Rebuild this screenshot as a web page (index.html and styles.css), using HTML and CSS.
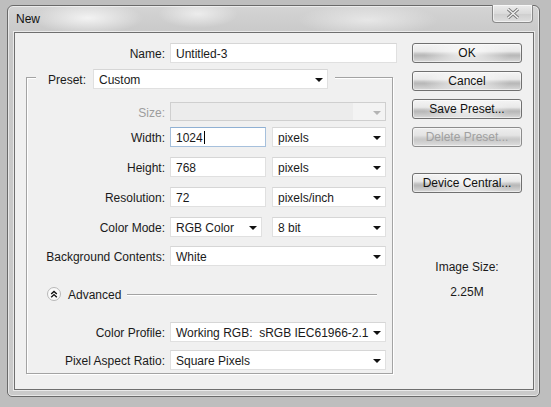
FILE: index.html
```html
<!DOCTYPE html>
<html>
<head>
<meta charset="utf-8">
<title>New</title>
<link rel="stylesheet" href="styles.css">
</head>
<body>
<div class="window">
  <div class="titlebar">
    <span class="title">New</span>
    <div class="close">
      <svg width="14" height="11" viewBox="0 0 14 11">
        <path d="M2 1 L12 10 M12 1 L2 10" stroke="#7a7a7a" stroke-width="3.2" fill="none"/>
        <path d="M2 1 L12 10 M12 1 L2 10" stroke="#f6f6f6" stroke-width="1.3" fill="none"/>
      </svg>
    </div>
  </div>
  <div class="client">
    <div class="form">
      <div class="row">
        <span class="lbl">Name:</span>
        <div class="field w-name">Untitled-3</div>
      </div>
      <div class="group">
        <div class="legend">
          <span class="legend-lbl">Preset:</span>
          <div class="field select w-preset"><span>Custom</span><span class="caret"></span></div>
        </div>
        <div class="row r-size">
          <span class="lbl disabled">Size:</span>
          <div class="field select w-full off"><span></span><span class="caret gray"></span></div>
        </div>
        <div class="row r-first">
          <span class="lbl">Width:</span>
          <div class="field w-num focus"><span>1024</span><span class="cursor"></span></div>
          <div class="field select w-unit"><span>pixels</span><span class="caret"></span></div>
        </div>
        <div class="row r-next">
          <span class="lbl">Height:</span>
          <div class="field w-num">768</div>
          <div class="field select w-unit"><span>pixels</span><span class="caret"></span></div>
        </div>
        <div class="row r-next">
          <span class="lbl">Resolution:</span>
          <div class="field w-num">72</div>
          <div class="field select w-unit"><span>pixels/inch</span><span class="caret"></span></div>
        </div>
        <div class="row r-next">
          <span class="lbl">Color Mode:</span>
          <div class="field select w-mode"><span>RGB Color</span><span class="caret"></span></div>
          <div class="field select w-bit"><span>8 bit</span><span class="caret"></span></div>
        </div>
        <div class="row r-bg">
          <span class="lbl">Background Contents:</span>
          <div class="field select w-full"><span>White</span><span class="caret"></span></div>
        </div>
        <div class="advanced">
          <span class="adv-icon">
            <svg width="14" height="14" viewBox="0 0 14 14">
              <circle cx="7" cy="7" r="6.5" fill="#fafafa" stroke="#b8b8b8"/>
              <path d="M4.2 7 L7 4.4 L9.8 7 M4.2 10.2 L7 7.6 L9.8 10.2" stroke="#111" stroke-width="1.4" fill="none"/>
            </svg>
          </span>
          <span class="adv-text">Advanced</span>
          <span class="adv-line"></span>
        </div>
        <div class="row r-profile">
          <span class="lbl">Color Profile:</span>
          <div class="field select w-full"><span>Working RGB:&nbsp; sRGB IEC61966-2.1</span><span class="caret"></span></div>
        </div>
        <div class="row r-pixel">
          <span class="lbl">Pixel Aspect Ratio:</span>
          <div class="field select w-full"><span>Square Pixels</span><span class="caret"></span></div>
        </div>
      </div>
    </div>
    <div class="buttons">
      <div class="btn">OK</div>
      <div class="btn gap">Cancel</div>
      <div class="btn gap">Save Preset...</div>
      <div class="btn gap off">Delete Preset...</div>
      <div class="btn gap-big">Device Central...</div>
      <div class="info-lbl">Image Size:</div>
      <div class="info-val">2.25M</div>
    </div>
  </div>
</div>
</body>
</html>
```

FILE: styles.css
```css
html, body {
  margin: 0;
  padding: 0;
}
body {
  background: #bebebe;
  font-family: "Liberation Sans", Arial, sans-serif;
  font-size: 12px;
  color: #1a1a1a;
  width: 551px;
  height: 407px;
  overflow: hidden;
}
.window {
  margin: 5px 0 0 7px;
  width: 533px;
  height: 392px;
  box-sizing: border-box;
  border: 1px solid #6a6a6a;
  border-radius: 6px 6px 5px 5px;
  padding: 0 5px 6px 6px;
  display: flex;
  flex-direction: column;
  background:
    radial-gradient(ellipse 55px 16px at 80px 12px, rgba(255,255,255,0.75), rgba(255,255,255,0)),
    radial-gradient(ellipse 40px 14px at 190px 8px, rgba(255,255,255,0.6), rgba(255,255,255,0)),
    radial-gradient(ellipse 70px 16px at 360px 14px, rgba(255,255,255,0.5), rgba(255,255,255,0)),
    linear-gradient(#d4d4d4, #c8c8c8 30px, #cacaca);
  box-shadow: inset 0 0 0 1px rgba(255,255,255,0.55);
}
.titlebar {
  height: 26px;
  display: flex;
  justify-content: space-between;
  align-items: flex-start;
  flex: none;
}
.title {
  margin-left: 2px;
  padding-top: 6px;
  line-height: 15px;
  color: #111;
}
.close {
  width: 41px;
  height: 18px;
  box-sizing: border-box;
  margin-top: -1px;
  margin-right: 1px;
  border: 1px solid #8a8a8a;
  border-top: none;
  border-radius: 0 0 4px 4px;
  background: linear-gradient(#ececec, #dadada 50%, #cfcfcf 55%, #dedede);
  display: flex;
  align-items: center;
  justify-content: center;
  box-shadow: inset 0 0 0 1px rgba(255,255,255,0.6);
}
.close svg {
  display: block;
}
.client {
  flex: 1;
  border: 1px solid #6f6f6f;
  background: #f0f0f0;
  padding: 10px 0 0 11px;
  display: flex;
  align-items: flex-start;
  box-shadow: 0 0 0 1px rgba(255,255,255,0.6);
}
.form {
  width: 371px;
  flex: none;
}
.row {
  display: flex;
  align-items: center;
  height: 20px;
}
.lbl {
  width: 139px;
  margin-right: 5px;
  padding-top: 3px;
  line-height: 15px;
  text-align: right;
  white-space: nowrap;
  flex: none;
}
.group .lbl {
  width: 138px;
}
.lbl.disabled {
  color: #9d9d9d;
}
.field {
  height: 20px;
  box-sizing: border-box;
  background: #fff;
  border: 1px solid #e0e0e0;
  border-top-color: #d6d6d6;
  padding: 2px 4px 0 5px;
  line-height: 15px;
  white-space: nowrap;
  flex: none;
  display: flex;
  align-items: center;
}
.select {
  justify-content: space-between;
}
.caret {
  width: 0;
  height: 0;
  border-left: 4px solid transparent;
  border-right: 4px solid transparent;
  border-top: 4px solid #111;
  flex: none;
}
.caret.gray {
  border-top-color: #b4b4b4;
}
.field.off {
  background: linear-gradient(to right, #ececec 0, #ececec 85%, #f3f3f3 85%);
  border-color: #cfcfcf;
}
.field.focus {
  border-color: #a6c0dc;
  border-top-color: #8fb0d3;
}
.cursor {
  width: 1px;
  height: 13px;
  background: #000;
  margin-left: 1px;
  margin-top: -1px;
}
.w-name { width: 227px; }
.w-preset { width: 235px; }
.w-full { width: 216px; }
.w-num { width: 96px; }
.w-unit { width: 114px; margin-left: 6px; }
.w-mode { width: 92px; }
.w-bit { width: 114px; margin-left: 10px; }

.group {
  margin-top: 14px;
  width: 367px;
  box-sizing: border-box;
  border: 1px solid #a3a3a3;
  box-shadow: inset 1px 1px 0 #fff, 1px 1px 0 #fff;
  padding-bottom: 3px;
}
.legend {
  margin-top: -9px;
  margin-left: 9px;
  padding: 0 7px 0 12px;
  background: #f0f0f0;
  display: flex;
  align-items: center;
  width: fit-content;
  height: 20px;
}
.legend-lbl {
  width: 40px;
  margin-right: 5px;
  padding-top: 3px;
  line-height: 15px;
}
.r-size { margin-top: 13px; height: 19px; }
.r-size .field { height: 19px; }
.r-first { margin-top: 6px; }
.r-next { margin-top: 10px; }
.r-bg { margin-top: 9px; }
.advanced {
  margin-top: 21px;
  height: 14px;
  display: flex;
  align-items: center;
  padding-left: 20px;
}
.adv-icon {
  width: 14px;
  height: 14px;
  flex: none;
}
.adv-icon svg { display: block; }
.adv-text {
  margin-left: 7px;
  line-height: 14px;
  padding-top: 1px;
}
.adv-line {
  flex: 1;
  height: 1px;
  background: #a3a3a3;
  margin: 0 15px 0 6px;
  box-shadow: 0 1px 0 #fff;
}
.r-profile { margin-top: 21px; }
.r-pixel { margin-top: 8px; }

.buttons {
  margin-left: 15px;
  width: 110px;
  flex: none;
  display: flex;
  flex-direction: column;
  align-items: stretch;
}
.btn {
  height: 20px;
  box-sizing: border-box;
  border: 1px solid #707070;
  border-radius: 3px;
  text-align: center;
  padding-top: 2px;
  line-height: 15px;
  color: #111;
  background:
    radial-gradient(ellipse 40% 70% at 50% 55%, rgba(255,255,255,0.85), rgba(255,255,255,0)),
    linear-gradient(#f4f4f4 0%, #e9e9e9 40%, #c2c2c2 55%, #b8b8b8 65%, #dadada 100%);
  box-shadow: inset 0 0 0 1px rgba(255,255,255,0.5);
}
.btn.gap { margin-top: 8px; }
.btn.gap-big { margin-top: 26px; }
.btn.off {
  color: #a0a0a0;
  border-color: #8c8c8c;
  background: linear-gradient(#eeeeee 0%, #e4e4e4 40%, #cfcfcf 55%, #c8c8c8 65%, #dedede 100%);
}
.info-lbl {
  margin-top: 67px;
  text-align: center;
  line-height: 15px;
}
.info-val {
  margin-top: 10px;
  text-align: center;
  line-height: 15px;
}
```
